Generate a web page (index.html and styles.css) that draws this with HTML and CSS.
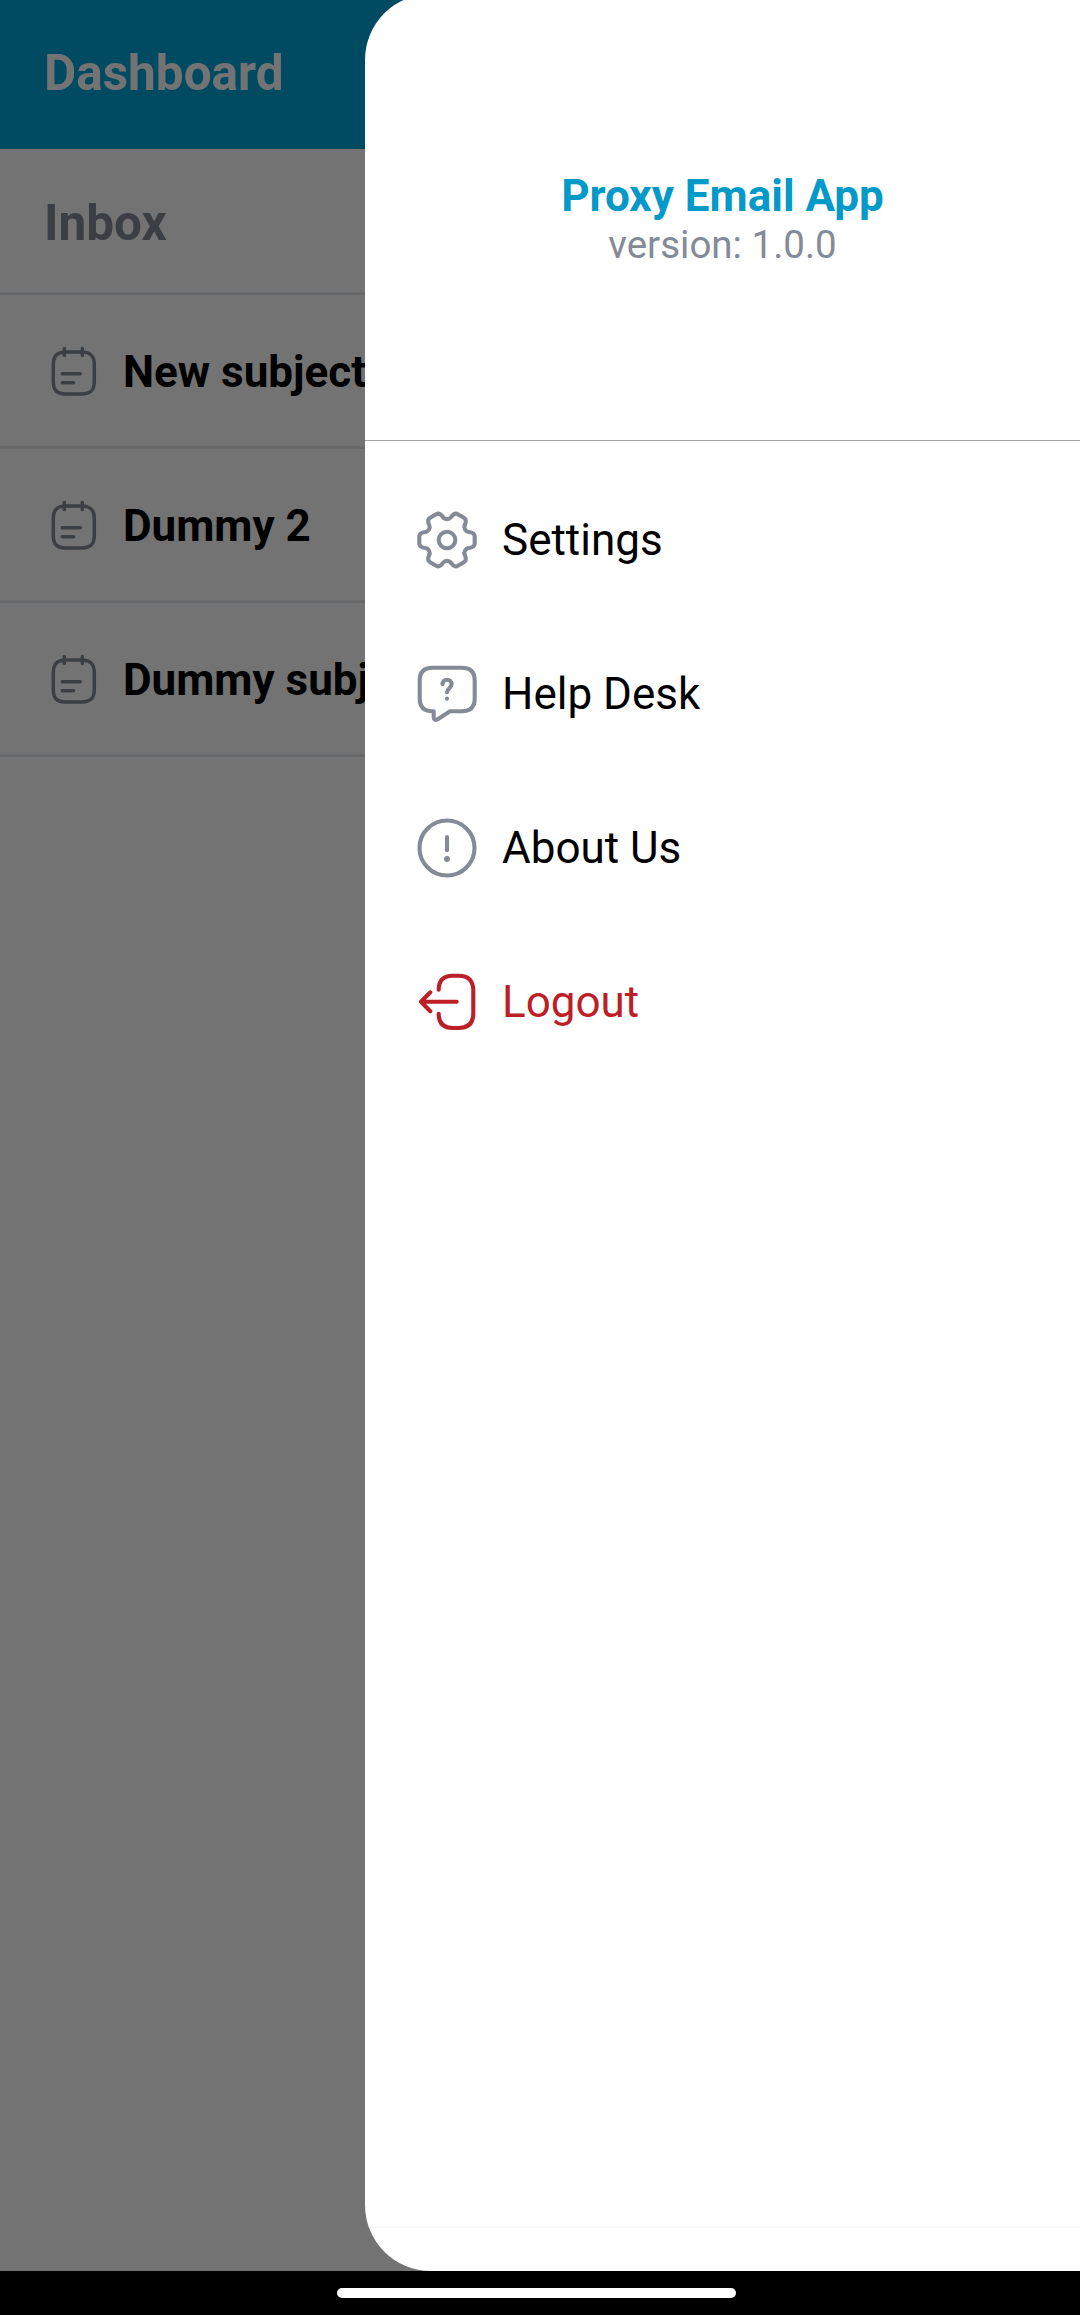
FILE: index.html
```html
<!DOCTYPE html>
<html lang="en">
<head>
<meta charset="utf-8">
<title>Dashboard</title>
<link rel="stylesheet" href="styles.css">
</head>
<body>
<svg class="defs" width="0" height="0" aria-hidden="true">
  <symbol id="note" viewBox="0 0 55 55">
    <path d="M20 9H35.500C44.500 9 48.300 12.800 48.300 22V38.500C48.300 47.500 44.500 51 35.500 51H20C11 51 7.300 47.500 7.300 38.500V22C7.300 12.800 11 9 20 9ZM18.300 5.500V12.500M36.300 5.500V12.500M16.300 30.700H34.300M16.300 39.700H27.500"/>
  </symbol>
</svg>
<div class="screen">
  <main class="dashboard">
    <header class="topbar">Dashboard</header>
    <h2 class="section">Inbox</h2>
    <ul class="mails">
      <li class="mail"><svg class="mail-icon"><use href="#note"/></svg><span class="subject">New subject</span></li>
      <li class="mail"><svg class="mail-icon"><use href="#note"/></svg><span class="subject">Dummy 2</span></li>
      <li class="mail"><svg class="mail-icon"><use href="#note"/></svg><span class="subject">Dummy subject</span></li>
    </ul>
  </main>
  <div class="scrim"></div>
  <aside class="drawer">
    <div class="brand">
      <div class="app-name">Proxy Email App</div>
      <div class="version">version: 1.0.0</div>
    </div>
    <nav class="menu">
      <a class="item">
        <svg class="icon" viewBox="-33 -33 66 66">
          <circle r="8.300"/>
          <path id="tooth" d="M21.500 8C25 7.700 27.700 7 27.700 3.500V-3.500C27.700 -7 25 -7.700 21.500 -8C18.600 -8.300 16.500 -12 17.700 -14.600"/>
          <use href="#tooth" transform="rotate(60)"/>
          <use href="#tooth" transform="rotate(120)"/>
          <use href="#tooth" transform="rotate(180)"/>
          <use href="#tooth" transform="rotate(240)"/>
          <use href="#tooth" transform="rotate(300)"/>
        </svg>
        <span>Settings</span>
      </a>
      <a class="item">
        <svg class="icon" viewBox="0 0 66 66">
          <path d="M19.700 50.300H18.400C10 50.300 5.700 46 5.700 37.600V19.400C5.700 11 10 6.700 18.400 6.700H48C56.400 6.700 60.700 11 60.700 19.400V37.600C60.700 46 56.400 50.300 48 50.300H36L23.300 58.400C21.500 59.500 19.700 58.500 19.700 56.600Z"/>
          <path d="M28.500 23.300C28.500 20.600 30.500 18.700 33 18.700C35.600 18.700 37.600 20.600 37.600 23.100C37.600 27 33 27.300 33 31.200"/>
          <circle class="dot" cx="33" cy="37.700" r="2.100"/>
        </svg>
        <span>Help Desk</span>
      </a>
      <a class="item">
        <svg class="icon" viewBox="0 0 66 66">
          <circle cx="33" cy="33" r="27.500"/>
          <path d="M33 22V35.300"/>
          <circle class="dot" cx="33" cy="44" r="2.900"/>
        </svg>
        <span>About Us</span>
      </a>
      <a class="item logout">
        <svg class="icon" viewBox="0 0 66 66">
          <path d="M24.700 20.700C24.700 11.500 29.500 6.700 38.500 6.700H44.500C54.500 6.700 59.300 12 59.300 21.500V44.500C59.300 54 54.500 59 44.500 59H38.500C29.500 59 24.700 54 24.700 44.700M42.700 32.700H7M16.300 23.300L7 32.700L16.300 42.300"/>
        </svg>
        <span>Logout</span>
      </a>
    </nav>
    <div class="drawer-foot"></div>
  </aside>
  <footer class="navbar"><div class="pill"></div></footer>
</div>
</body>
</html>
```

FILE: styles.css
```css
* {
  box-sizing: border-box;
}

body {
  margin: 0;
  background: #000;
  font-family: Roboto, sans-serif;
}

.defs {
  position: absolute;
}

.screen {
  position: relative;
  width: 1080px;
  height: 2315px;
  display: flex;
  flex-direction: column;
  overflow: hidden;
}

.dashboard {
  flex: 1;
  background: #fff;
}

.topbar {
  height: 149px;
  padding: 2px 44px 5px;
  display: flex;
  align-items: center;
  background: #00a5da;
  color: #fff;
  font-size: 49.5px;
  font-weight: 700;
}

.section {
  height: 146px;
  margin: 0;
  padding: 5px 44px 0;
  display: flex;
  align-items: center;
  border-bottom: 3px solid #e4e6e9;
  color: #848b96;
  font-size: 49.5px;
  font-weight: 700;
}

.mails {
  margin: 0;
  padding: 0;
  list-style: none;
}

.mail {
  height: 154px;
  padding-left: 46px;
  display: flex;
  align-items: center;
  gap: 22px;
  border-bottom: 3px solid #e4e6e9;
  font-size: 44px;
  font-weight: 700;
}

.subject {
  padding-top: 2px;
}

.mail-icon {
  width: 55px;
  height: 55px;
  fill: none;
  stroke: #848b96;
  stroke-width: 3.500;
  stroke-linecap: round;
}

.scrim {
  position: absolute;
  inset: 0 0 44px;
  background: rgba(0, 0, 0, 0.55);
}

.drawer {
  position: absolute;
  top: -6px;
  right: 0;
  bottom: 44px;
  width: 715px;
  display: flex;
  flex-direction: column;
  overflow: hidden;
  border-radius: 66px 0 0 66px;
  background: #fff;
}

.brand {
  height: 447px;
  padding-top: 2px;
  display: flex;
  flex-direction: column;
  align-items: center;
  justify-content: center;
  border-bottom: 1px solid #a3a7a7;
}

.app-name {
  color: #0399c8;
  font-size: 44px;
  line-height: 52px;
  font-weight: 700;
}

.version {
  color: #848b96;
  font-size: 38.5px;
  line-height: 45px;
}

.menu {
  flex: 1;
  padding: 22px 49px 0;
}

.item {
  height: 154px;
  display: flex;
  align-items: center;
  gap: 22px;
  color: #000;
  font-size: 44px;
}

.icon {
  width: 66px;
  height: 66px;
  fill: none;
  stroke: #848b96;
  stroke-width: 4.100;
  stroke-linecap: round;
  stroke-linejoin: round;
}

.dot {
  fill: #848b96;
  stroke: none;
}

.logout {
  color: #bc1f27;
}

.logout .icon {
  stroke: #bc1f27;
}

.drawer-foot {
  height: 45px;
  border-top: 2px solid #f8fafa;
}

.navbar {
  height: 44px;
  display: flex;
  align-items: center;
  justify-content: center;
  padding: 0 7px 0 0;
  background: #000;
}

.pill {
  width: 399px;
  height: 10px;
  border-radius: 5px;
  background: #fff;
}
```
